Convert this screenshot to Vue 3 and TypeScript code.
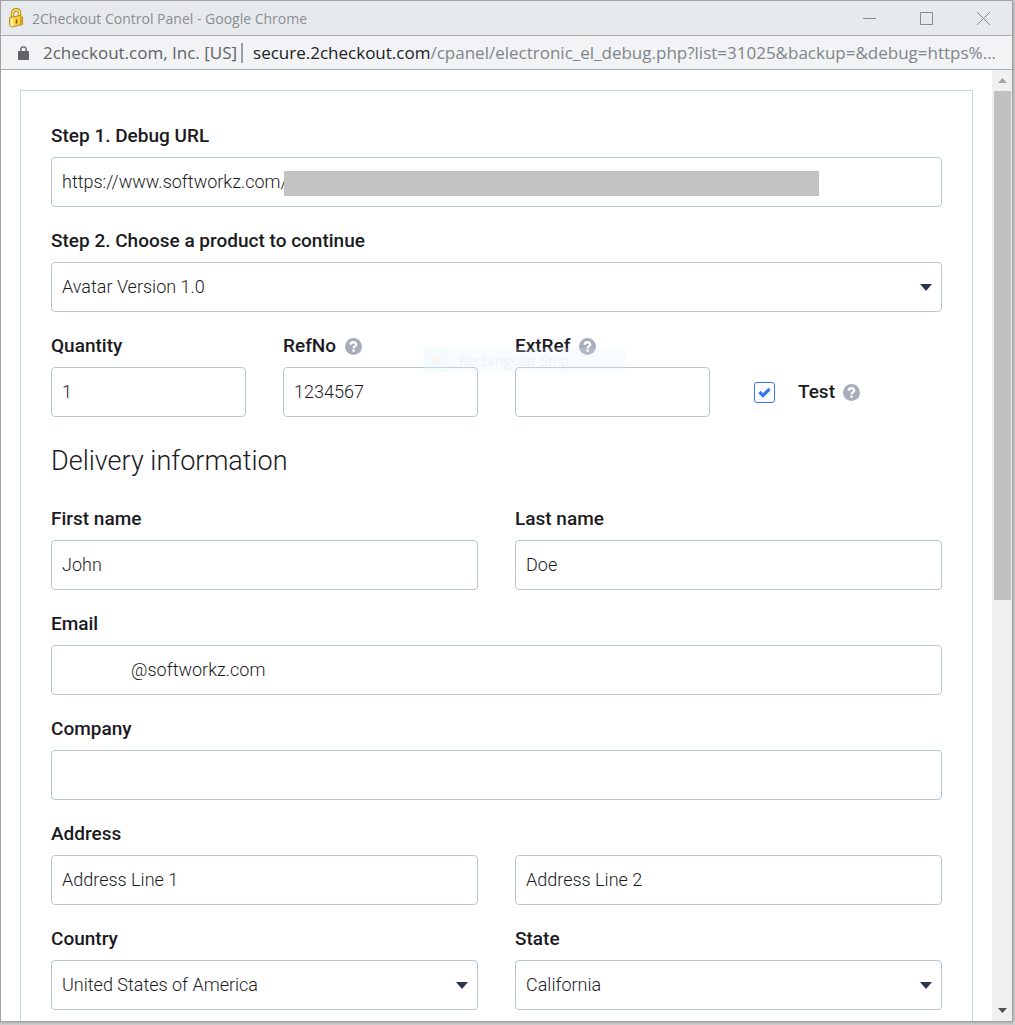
<script setup lang="ts">
import { ref } from 'vue'

const debugUrl = ref('https://www.softworkz.com/')
const product = ref('Avatar Version 1.0')
const quantity = ref('1')
const refNo = ref('1234567')
const extRef = ref('')
const isTest = ref(true)
const firstName = ref('John')
const lastName = ref('Doe')
const email = ref('@softworkz.com')
const company = ref('')
const address1 = ref('Address Line 1')
const address2 = ref('Address Line 2')
const country = ref('United States of America')
const state = ref('California')
</script>

<template>
  <div class="desktop">
    <div class="window">
      <header class="titlebar">
        <svg class="favicon" viewBox="0 0 16 20" aria-hidden="true">
          <path d="M4.500 10V5.800C4.500 3.200 6 2 8 1.800C10.200 1.600 11.500 3 11.500 5V8" fill="none" stroke="#b8860f" stroke-width="3.400" />
          <path d="M4.500 10V5.800C4.500 3.200 6 2 8 1.800C10.200 1.600 11.500 3 11.500 5V8" fill="none" stroke="#f6dc6a" stroke-width="1.800" />
          <path d="M1.500 9.500L12.500 7.500L14.500 9V16.500L4 19L1.500 17.500Z" fill="#f7cf3f" stroke="#c08e18" stroke-width="1" />
          <path d="M2.500 10.500L5.500 10V18L4 18.300L2.500 17.200Z" fill="#fff3a8" />
          <path d="M12 8.500L14 9.500V16L12 16.500Z" fill="#dba321" />
          <path d="M8.500 11.500V15.500" stroke="#7a560c" stroke-width="1.400" />
        </svg>
        <span class="title">2Checkout Control Panel - Google Chrome</span>
        <div class="controls">
          <button type="button" aria-label="Minimize">
            <svg viewBox="0 0 13 13"><path d="M0 6.500H13" /></svg>
          </button>
          <button type="button" aria-label="Maximize">
            <svg viewBox="0 0 13 13"><path d="M.5 .5H12.500V12.500H.5Z" /></svg>
          </button>
          <button type="button" aria-label="Close">
            <svg viewBox="0 0 13 13"><path d="M0 0L13 13M13 0L0 13" /></svg>
          </button>
        </div>
      </header>

      <div class="addressbar">
        <svg class="lock" viewBox="0 0 11 14" aria-hidden="true">
          <path d="M2.800 6V3.600a2.700 2.700 0 0 1 5.400 0V6" fill="none" stroke="#5f6368" stroke-width="1.400" />
          <rect x="0" y="5" width="11" height="9" rx="1" fill="#5f6368" />
        </svg>
        <span class="issuer">2checkout.com, Inc. [US]</span>
        <span class="divider"></span>
        <span class="url"><b>secure.2checkout.com</b>/cpanel/electronic_el_debug.php?list=31025&amp;backup=&amp;debug=https%...</span>
      </div>

      <div class="viewport">
        <main class="page">
          <form class="panel" @submit.prevent>
            <div class="field">
              <label for="debug-url">Step 1. Debug URL</label>
              <div class="control">
                <input id="debug-url" v-model="debugUrl" type="text" />
                <span class="redaction"></span>
              </div>
            </div>

            <div class="field">
              <label for="product">Step 2. Choose a product to continue</label>
              <div class="control">
                <select id="product" v-model="product"><option>Avatar Version 1.0</option></select>
                <svg class="caret" viewBox="0 0 12 7" aria-hidden="true"><path d="M0 0H12L6 7Z" /></svg>
              </div>
            </div>

            <div class="row four">
              <div class="field">
                <label for="quantity">Quantity</label>
                <input id="quantity" v-model="quantity" type="text" />
              </div>
              <div class="field">
                <div class="label-line">
                  <label for="refno">RefNo</label>
                  <svg class="help" viewBox="0 0 17 17" aria-hidden="true"><circle cx="8.500" cy="8.500" r="8.500" /><path d="M5.700 6.800C5.700 3.500 11.200 3.500 11.200 6.600C11.200 8.400 8.600 8.400 8.600 10.300M8.600 11.400V13.800" /></svg>
                </div>
                <input id="refno" v-model="refNo" type="text" />
              </div>
              <div class="field">
                <div class="label-line">
                  <label for="extref">ExtRef</label>
                  <svg class="help" viewBox="0 0 17 17" aria-hidden="true"><circle cx="8.500" cy="8.500" r="8.500" /><path d="M5.700 6.800C5.700 3.500 11.200 3.500 11.200 6.600C11.200 8.400 8.600 8.400 8.600 10.300M8.600 11.400V13.800" /></svg>
                </div>
                <input id="extref" v-model="extRef" type="text" />
              </div>
              <div class="test">
                <input id="test" v-model="isTest" type="checkbox" />
                <label for="test">Test</label>
                <svg class="help" viewBox="0 0 17 17" aria-hidden="true"><circle cx="8.500" cy="8.500" r="8.500" /><path d="M5.700 6.800C5.700 3.500 11.200 3.500 11.200 6.600C11.200 8.400 8.600 8.400 8.600 10.300M8.600 11.400V13.800" /></svg>
              </div>
            </div>

            <h2>Delivery information</h2>

            <div class="row two">
              <div class="field">
                <label for="first-name">First name</label>
                <input id="first-name" v-model="firstName" type="text" />
              </div>
              <div class="field">
                <label for="last-name">Last name</label>
                <input id="last-name" v-model="lastName" type="text" />
              </div>
            </div>

            <div class="field">
              <label for="email">Email</label>
              <input id="email" v-model="email" class="email" type="text" />
            </div>

            <div class="field">
              <label for="company">Company</label>
              <input id="company" v-model="company" type="text" />
            </div>

            <div class="row two bottom">
              <div class="field">
                <label for="address-1">Address</label>
                <input id="address-1" v-model="address1" type="text" />
              </div>
              <input v-model="address2" type="text" aria-label="Address Line 2" />
            </div>

            <div class="row two">
              <div class="field">
                <label for="country">Country</label>
                <div class="control">
                  <select id="country" v-model="country"><option>United States of America</option></select>
                  <svg class="caret" viewBox="0 0 12 7" aria-hidden="true"><path d="M0 0H12L6 7Z" /></svg>
                </div>
              </div>
              <div class="field">
                <label for="state">State</label>
                <div class="control">
                  <select id="state" v-model="state"><option>California</option></select>
                  <svg class="caret" viewBox="0 0 12 7" aria-hidden="true"><path d="M0 0H12L6 7Z" /></svg>
                </div>
              </div>
            </div>
          </form>
        </main>

        <div class="scrollbar" aria-hidden="true">
          <span class="arrow"><svg viewBox="0 0 9 5"><path d="M0 5H9L4.500 0Z" fill="#a3a3a3" /></svg></span>
          <div class="track"><div class="thumb"></div></div>
          <span class="arrow"><svg viewBox="0 0 9 5"><path d="M0 0H9L4.500 5Z" fill="#505050" /></svg></span>
        </div>

        <div class="snip" aria-hidden="true"><span class="snip-icon"></span>Rectangular Snip</div>
      </div>
    </div>
  </div>
</template>

<style>
body {
  margin: 0;
}
</style>

<style scoped>
* {
  box-sizing: border-box;
}

.desktop {
  height: 100vh;
  padding: 0 2px 3px 0;
  background: #d2d3d4;
  overflow: hidden;
}

.window {
  display: flex;
  flex-direction: column;
  height: 100%;
  border: 1px solid #a0a2a5;
  background: #fff;
  box-shadow: 0 0 4px #8a8a8a;
}

.titlebar {
  display: flex;
  align-items: center;
  height: 35px;
  flex: none;
  padding-left: 7px;
  background: #e6eaed;
  border-bottom: 1px solid #aaacae;
  font-family: "Open Sans", "Noto Sans", sans-serif;
  font-size: 14px;
  color: #8b8e91;
}

.favicon {
  width: 16px;
  height: 20px;
  margin-right: 8px;
}

.controls {
  display: flex;
  margin-left: auto;
}

.controls button {
  display: flex;
  align-items: center;
  justify-content: center;
  width: 57px;
  height: 34px;
  padding: 0;
  border: 0;
  background: none;
}

.controls svg {
  width: 13px;
  height: 13px;
  fill: none;
  stroke: #868a8d;
}

.addressbar {
  display: flex;
  align-items: center;
  height: 34px;
  flex: none;
  padding-left: 17px;
  background: #f1f3f4;
  border-bottom: 1px solid #aaacae;
  font-family: "Open Sans", "Noto Sans", sans-serif;
  font-size: 17px;
  color: #5f6368;
  white-space: nowrap;
  overflow: hidden;
}

.lock {
  flex: none;
  width: 11px;
  height: 14px;
  margin-right: 14px;
}

.divider {
  flex: none;
  width: 2px;
  height: 20px;
  margin: 0 10px 0 4px;
  background: #9a9ea2;
}

.url {
  color: #80868b;
}

.url b {
  font-weight: 400;
  color: #202124;
}

.viewport {
  position: relative;
  display: flex;
  flex: 1;
  min-height: 0;
  overflow: hidden;
}

.page {
  flex: 1;
  min-width: 0;
  padding: 20px 19px 0;
  font-family: Roboto, "Open Sans", sans-serif;
  font-size: 19px;
  color: #1b1b1f;
}

.panel {
  display: flex;
  flex-direction: column;
  gap: 21px;
  padding: 32px 30px 60px;
  border: 1px solid #c8d8e3;
}

.field {
  display: flex;
  flex-direction: column;
  gap: 8px;
}

label {
  line-height: 26px;
  font-weight: 500;
}

.label-line {
  display: flex;
  align-items: center;
  gap: 9px;
}

.help {
  width: 17px;
  height: 17px;
}

.help circle {
  fill: #a8adbb;
}

.help path {
  fill: none;
  stroke: #fff;
  stroke-width: 2.400;
}

.control {
  position: relative;
}

input[type="text"],
select {
  display: block;
  width: 100%;
  height: 50px;
  padding: 0 10px 2px;
  border: 1px solid #b9c6d6;
  border-radius: 4px;
  background: #fff;
  font-family: inherit;
  font-size: 18px;
  font-weight: 300;
  color: #1b1b1f;
  appearance: none;
}

input[type="text"].email {
  padding-left: 79px;
}

.redaction {
  position: absolute;
  top: 14px;
  left: 233px;
  width: 60%;
  height: 25px;
  background: #c3c3c3;
}

.caret {
  position: absolute;
  top: 22px;
  right: 10px;
  width: 12px;
  height: 7px;
  fill: #2b3553;
  pointer-events: none;
}

.row {
  display: grid;
  column-gap: 37px;
}

.four {
  grid-template-columns: repeat(4, 1fr);
}

.two {
  grid-template-columns: repeat(2, 1fr);
}

.bottom {
  align-items: end;
}

.test {
  display: flex;
  align-items: center;
  align-self: end;
  height: 50px;
  padding-left: 7px;
}

.test label {
  margin: 0 8px 0 23px;
}

input[type="checkbox"] {
  width: 21px;
  height: 21px;
  margin: 0;
  border: 1px solid #3873f5;
  border-radius: 3px;
  appearance: none;
  background: #fff;
}

input[type="checkbox"]:checked {
  background: #fff url("data:image/svg+xml,%3Csvg xmlns='http://www.w3.org/2000/svg' viewBox='0 0 13 11'%3E%3Cpath d='M1.500 5L5 8.500L11.500 2' fill='none' stroke='%233873f5' stroke-width='3.200'/%3E%3C/svg%3E") center / 13px 11px no-repeat;
}

h2 {
  margin: 0;
  padding: 5px 0 6px;
  font-size: 27px;
  font-weight: 300;
  line-height: 36px;
}

.scrollbar {
  display: flex;
  flex-direction: column;
  flex: none;
  width: 20px;
  background: #f0f0f0;
}

.arrow {
  display: flex;
  align-items: center;
  justify-content: center;
  height: 21px;
}

.arrow svg {
  width: 9px;
  height: 5px;
}

.track {
  flex: 1;
  padding: 0 1px 0 2px;
}

.thumb {
  height: 56%;
  background: #c1c1c1;
}

.snip {
  position: absolute;
  top: 278px;
  left: 423px;
  display: flex;
  align-items: center;
  gap: 11px;
  width: 202px;
  height: 24px;
  background: rgba(225, 240, 255, 0.2);
  font-family: "Open Sans", "Noto Sans", sans-serif;
  font-size: 14px;
  color: rgba(120, 120, 130, 0.1);
  pointer-events: none;
}

.snip-icon {
  width: 24px;
  height: 24px;
  background: radial-gradient(circle, rgba(250, 235, 230, 0.5) 3px, rgba(225, 240, 255, 0.15) 5px);
}
</style>
